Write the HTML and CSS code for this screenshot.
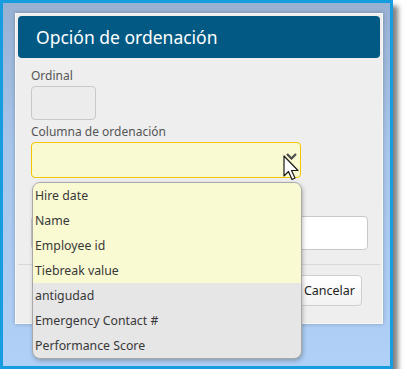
FILE: index.html
```html
<!DOCTYPE html>
<html lang="es">
<head>
<meta charset="UTF-8">
<title>Opción de ordenación</title>
<link rel="stylesheet" href="styles.css">
</head>
<body>

<div class="screen">
  <div class="dialog">
    <div class="dialog-header">Opción de ordenación</div>
    <div class="dialog-body">
      <div class="field">
        <label>Ordinal</label>
        <div class="input input-small"></div>
      </div>
      <div class="field field-select">
        <label>Columna de ordenación</label>
        <div class="select">
          <svg class="chevron" width="11" height="7" viewBox="0 0 11 7"><path d="M1 1l4.5 4.5L10 1" fill="none" stroke="#4a4a4a" stroke-width="2.2"/></svg>
        </div>
      </div>
      <div class="field">
        <div class="input input-wide"></div>
      </div>
    </div>
    <div class="dialog-footer">
      <button class="btn">Cancelar</button>
    </div>

    <!-- lista desplegada del select -->
    <ul class="dropdown">
      <li class="hl">Hire date</li>
      <li class="hl">Name</li>
      <li class="hl">Employee id</li>
      <li class="hl">Tiebreak value</li>
      <li>antigudad</li>
      <li>Emergency Contact #</li>
      <li>Performance Score</li>
    </ul>

    <svg class="cursor" width="17" height="27" viewBox="0 0 17 27">
      <path d="M1 1V21L5.5 16.5L9 24.5L12 23L8.5 15.5H15Z" fill="#fff" stroke="#1a1a1a" stroke-width="1.2" stroke-linejoin="round"/>
    </svg>
  </div>
</div>

</body>
</html>
```

FILE: styles.css
```css
body {
  margin: 0;
  background: #fff;
  font-family: "Noto Sans", "Open Sans", sans-serif;
}
.screen {
  width: 393px;
  height: 369px;
  box-sizing: border-box;
  border: 3px solid #169de0;
  background: linear-gradient(to bottom, #98b1d3 0%, #a8c6ec 40%, #b0d0f7 100%);
  box-shadow: 5px 6px 5px rgba(0,0,0,0.5);
  padding: 10px 0 0 12px;
}
.dialog {
  position: relative;
  width: 368px;
  height: 311px;
  box-sizing: border-box;
  background: #eeeeee;
  border: 1px solid #f8f8f8;
  box-shadow: 0 0 4px rgba(0,0,0,0.25);
  padding: 2px;
}
.dialog-header {
  height: 42px;
  background: #025a84;
  border-radius: 4px;
  color: #fff;
  font-size: 17.5px;
  line-height: 42px;
  padding-left: 18px;
}
.dialog-body {
  padding: 11px 13px 14px;
  border-bottom: 1px solid #d8d8d8;
}
.field + .field {
  margin-top: 5px;
}
.field label {
  display: block;
  font-size: 12px;
  color: #555;
  line-height: 14px;
  margin-bottom: 3px;
}
.field-select {
  margin-bottom: 38px;
}
.input {
  height: 34px;
  box-sizing: border-box;
  border: 1px solid #c8c8c8;
  border-radius: 4px;
  background: #ececec;
}
.input-small {
  width: 65px;
}
.input-wide {
  width: 337px;
  background: linear-gradient(to right, #e8e8e8, #fff 60%);
}
.select {
  position: relative;
  width: 270px;
  height: 36px;
  box-sizing: border-box;
  border: 1px solid #f3c400;
  border-radius: 4px;
  background: #fafad2;
}
.chevron {
  position: absolute;
  right: 3px;
  top: 10px;
}
.dialog-footer {
  display: flex;
  justify-content: flex-end;
  padding: 10px 18px 0 0;
}
.btn {
  height: 31px;
  padding: 0 6px;
  border: 1px solid #cfcfcf;
  border-radius: 4px;
  background: linear-gradient(to bottom, #fff, #f2f2f2);
  font-family: inherit;
  font-size: 12.5px;
  color: #1e1e1e;
}
.dropdown {
  position: absolute;
  left: 16px;
  top: 168px;
  width: 268px;
  margin: 0;
  padding: 0;
  list-style: none;
  border: 1px solid #a8a8a8;
  border-radius: 8px;
  overflow: hidden;
  background: #e6e6e6;
  box-shadow: 1px 2px 4px rgba(0,0,0,0.25);
}
.dropdown li {
  height: 25px;
  line-height: 25px;
  padding-left: 2px;
  font-size: 12.3px;
  color: #383838;
}
.dropdown li.hl {
  background: #fafad2;
}
.cursor {
  position: absolute;
  left: 267px;
  top: 141px;
}
```
